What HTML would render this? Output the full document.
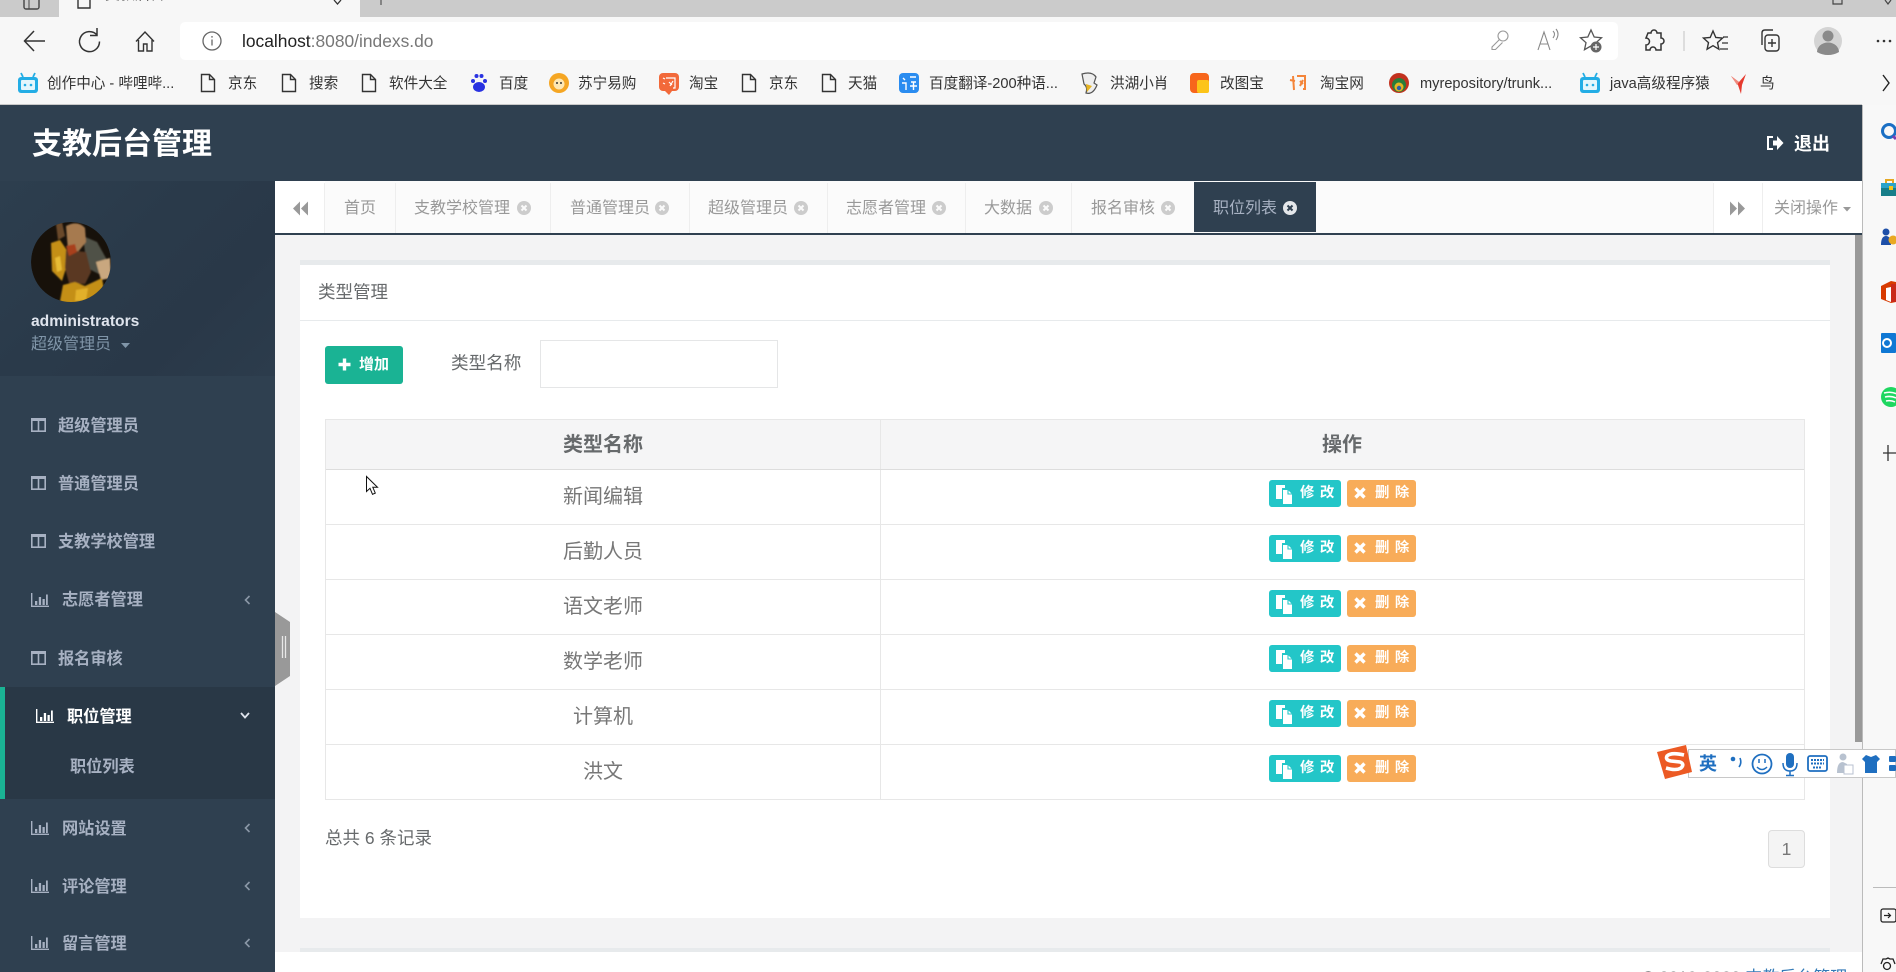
<!DOCTYPE html>
<html><head><meta charset="utf-8"><title>支教后台管理</title>
<style>
*{box-sizing:border-box;margin:0;padding:0}
html,body{width:1896px;height:972px;overflow:hidden;background:#fff}
body{position:relative;font-family:"Liberation Sans","Noto Sans CJK SC",sans-serif;color:#676a6c}
.b,.t,svg.a{position:absolute}
.t{white-space:nowrap;line-height:24px;height:24px}
.bm{font-size:14.6px;color:#333;margin-top:1px}
.tab{font-size:16px;color:#999}
.m{font-size:16.2px;font-weight:700;color:#a7b1c2;margin-top:1px}
.c{font-size:20px;color:#777;width:200px;text-align:center;left:503px;margin-top:1px}
.bt{font-size:14.4px;font-weight:700;color:#fff;letter-spacing:5.500px;margin-left:1px}
</style></head><body>
<!-- browser chrome -->
<div class="b" style="left:0;top:0;width:1896px;height:17px;background:#cbcbcb"></div>
<div class="b" style="left:59px;top:0;width:301px;height:17px;background:#f7f7f7"></div>
<div class="b" style="left:0;top:17px;width:1896px;height:88px;background:#f7f7f7"></div>
<div class="b" style="left:0;top:104px;width:1862px;height:1px;background:#c9c9c9"></div>
<div class="b" style="left:180px;top:22px;width:1438px;height:38px;background:#fff;border-radius:5px"></div>
<div class="t" style="left:105px;top:-17px;font-size:15px;color:#333">支教后台</div>
<div class="t" style="left:242px;top:29px;font-size:17.4px;color:#222">localhost<span style="color:#777">:8080/indexs.do</span></div>

<!-- bookmarks text -->
<div class="t bm" style="left:47px;top:71px">创作中心 - 哔哩哔...</div>
<div class="t bm" style="left:228px;top:71px">京东</div>
<div class="t bm" style="left:309px;top:71px">搜索</div>
<div class="t bm" style="left:389px;top:71px">软件大全</div>
<div class="t bm" style="left:499px;top:71px">百度</div>
<div class="t bm" style="left:578px;top:71px">苏宁易购</div>
<div class="t bm" style="left:689px;top:71px">淘宝</div>
<div class="t bm" style="left:769px;top:71px">京东</div>
<div class="t bm" style="left:848px;top:71px">天猫</div>
<div class="t bm" style="left:929px;top:71px">百度翻译-200种语...</div>
<div class="t bm" style="left:1110px;top:71px">洪湖小肖</div>
<div class="t bm" style="left:1220px;top:71px">改图宝</div>
<div class="t bm" style="left:1320px;top:71px">淘宝网</div>
<div class="t bm" style="left:1420px;top:71px">myrepository/trunk...</div>
<div class="t bm" style="left:1610px;top:71px">java高级程序猿</div>
<div class="t bm" style="left:1760px;top:71px">鸟</div>

<!-- app header -->
<div class="b" style="left:0;top:105px;width:1862px;height:76px;background:#2f4050"></div>
<div class="t" style="left:32px;top:133px;font-size:30px;font-weight:700;color:#fff">支教后台管理</div>
<div class="t" style="left:1794px;top:132px;font-size:18px;font-weight:700;color:#fff">退出</div>

<!-- sidebar -->
<div class="b" style="left:0;top:181px;width:275px;height:791px;background:#2f4050"></div>
<div class="b" style="left:0;top:181px;width:275px;height:195px;background:linear-gradient(135deg,#2d3e4e 0%,#2a3a4a 45%,#293848 70%,#2c3c4c 100%)"></div>
<div class="b" style="left:0;top:687px;width:275px;height:112px;background:#293846"></div>
<div class="b" style="left:0;top:687px;width:5px;height:112px;background:#1ab394"></div>
<div class="t" style="left:31px;top:310px;font-size:15.6px;font-weight:700;color:#dfe4ed">administrators</div>
<div class="t" style="left:31px;top:333px;font-size:16px;color:#8095a8">超级管理员</div>
<div class="t m" style="left:58px;top:413px">超级管理员</div>
<div class="t m" style="left:58px;top:471px">普通管理员</div>
<div class="t m" style="left:58px;top:529px">支教学校管理</div>
<div class="t m" style="left:62px;top:587px">志愿者管理</div>
<div class="t m" style="left:58px;top:646px">报名审核</div>
<div class="t m" style="left:67px;top:704px;color:#fff">职位管理</div>
<div class="t m" style="left:70px;top:754px">职位列表</div>
<div class="t m" style="left:62px;top:816px">网站设置</div>
<div class="t m" style="left:62px;top:874px">评论管理</div>
<div class="t m" style="left:62px;top:931px">留言管理</div>

<!-- main area -->
<div class="b" style="left:275px;top:181px;width:1587px;height:52px;background:#fbfbfb"></div>
<div class="b" style="left:275px;top:181px;width:50px;height:52px;background:#fff"></div>
<div class="b" style="left:1713px;top:181px;width:149px;height:52px;background:#fff"></div>
<div class="b" style="left:275px;top:233px;width:1587px;height:2px;background:#2f4050"></div>
<div class="b" style="left:275px;top:235px;width:1587px;height:717px;background:#f3f3f4"></div>
<div class="b" style="left:1855px;top:235px;width:7px;height:507px;background:#999"></div>
<div class="b" style="left:1194px;top:182px;width:122px;height:50px;background:#2f4050"></div>
<div class="t tab" style="left:344px;top:197px">首页</div>
<div class="t tab" style="left:414px;top:197px">支教学校管理</div>
<div class="t tab" style="left:570px;top:197px">普通管理员</div>
<div class="t tab" style="left:708px;top:197px">超级管理员</div>
<div class="t tab" style="left:846px;top:197px">志愿者管理</div>
<div class="t tab" style="left:984px;top:197px">大数据</div>
<div class="t tab" style="left:1091px;top:197px">报名审核</div>
<div class="t tab" style="left:1213px;top:197px;color:#a7b1c2">职位列表</div>
<div class="t tab" style="left:1774px;top:197px">关闭操作</div>

<!-- panel -->
<div class="b" style="left:300px;top:260px;width:1530px;height:658px;background:#fff;border-top:5px solid #e7eaec"></div>
<div class="b" style="left:300px;top:320px;width:1530px;height:1px;background:#e7eaec"></div>
<div class="t" style="left:318px;top:280px;font-size:17.5px;color:#676a6c">类型管理</div>
<div class="b" style="left:325px;top:346px;width:78px;height:38px;background:#1ab394;border-radius:3px"></div>
<div class="t" style="left:359px;top:353px;font-size:15px;font-weight:700;color:#fff">增加</div>
<div class="t" style="left:451px;top:351px;font-size:17.6px;color:#676a6c">类型名称</div>
<div class="b" style="left:540px;top:340px;width:238px;height:48px;background:#fff;border:1px solid #e5e6e7"></div>

<!-- table -->
<div class="b" style="left:325px;top:419px;width:1480px;height:381px;border:1px solid #e7e7e7"></div>
<div class="b" style="left:326px;top:420px;width:1478px;height:49px;background:#f5f5f6"></div>
<div class="b" style="left:880px;top:420px;width:1px;height:379px;background:#e7e7e7"></div>
<div class="b" style="left:326px;top:469px;width:1478px;height:1px;background:#ddd"></div>
<div class="b" style="left:326px;top:524px;width:1478px;height:1px;background:#e7e7e7"></div>
<div class="b" style="left:326px;top:579px;width:1478px;height:1px;background:#e7e7e7"></div>
<div class="b" style="left:326px;top:634px;width:1478px;height:1px;background:#e7e7e7"></div>
<div class="b" style="left:326px;top:689px;width:1478px;height:1px;background:#e7e7e7"></div>
<div class="b" style="left:326px;top:744px;width:1478px;height:1px;background:#e7e7e7"></div>
<div class="t c" style="top:432px;font-weight:700;color:#676a6c">类型名称</div>
<div class="t" style="left:1322px;top:433px;font-size:20px;font-weight:700;color:#676a6c">操作</div>
<div class="t c" style="top:484px">新闻编辑</div>
<div class="t c" style="top:539px">后勤人员</div>
<div class="t c" style="top:594px">语文老师</div>
<div class="t c" style="top:649px">数学老师</div>
<div class="t c" style="top:704px">计算机</div>
<div class="t c" style="top:759px">洪文</div>

<!-- row buttons -->
<div class="b" style="left:1269px;top:480px;width:72px;height:27px;background:#23c6c8;border-radius:3px"></div><div class="b" style="left:1347px;top:480px;width:69px;height:27px;background:#f8ac59;border-radius:3px"></div>
<div class="t bt" style="left:1299px;top:481px">修改</div><div class="t bt" style="left:1374px;top:481px">删除</div>
<div class="b" style="left:1269px;top:535px;width:72px;height:27px;background:#23c6c8;border-radius:3px"></div><div class="b" style="left:1347px;top:535px;width:69px;height:27px;background:#f8ac59;border-radius:3px"></div>
<div class="t bt" style="left:1299px;top:536px">修改</div><div class="t bt" style="left:1374px;top:536px">删除</div>
<div class="b" style="left:1269px;top:590px;width:72px;height:27px;background:#23c6c8;border-radius:3px"></div><div class="b" style="left:1347px;top:590px;width:69px;height:27px;background:#f8ac59;border-radius:3px"></div>
<div class="t bt" style="left:1299px;top:591px">修改</div><div class="t bt" style="left:1374px;top:591px">删除</div>
<div class="b" style="left:1269px;top:645px;width:72px;height:27px;background:#23c6c8;border-radius:3px"></div><div class="b" style="left:1347px;top:645px;width:69px;height:27px;background:#f8ac59;border-radius:3px"></div>
<div class="t bt" style="left:1299px;top:646px">修改</div><div class="t bt" style="left:1374px;top:646px">删除</div>
<div class="b" style="left:1269px;top:700px;width:72px;height:27px;background:#23c6c8;border-radius:3px"></div><div class="b" style="left:1347px;top:700px;width:69px;height:27px;background:#f8ac59;border-radius:3px"></div>
<div class="t bt" style="left:1299px;top:701px">修改</div><div class="t bt" style="left:1374px;top:701px">删除</div>
<div class="b" style="left:1269px;top:755px;width:72px;height:27px;background:#23c6c8;border-radius:3px"></div><div class="b" style="left:1347px;top:755px;width:69px;height:27px;background:#f8ac59;border-radius:3px"></div>
<div class="t bt" style="left:1299px;top:756px">修改</div><div class="t bt" style="left:1374px;top:756px">删除</div>

<div class="t" style="left:325px;top:826px;font-size:17.5px;color:#676a6c">总共 6 条记录</div>
<div class="b" style="left:1768px;top:830px;width:37px;height:38px;background:#f4f4f4;border:1px solid #ddd;border-radius:4px;text-align:center;line-height:36px;font-size:17.5px;color:#777">1</div>

<!-- footer -->
<div class="b" style="left:275px;top:952px;width:1587px;height:20px;background:#fff"></div>
<div class="b" style="left:300px;top:948px;width:1530px;height:4px;background:#e7eaec"></div>
<div class="t" style="left:1642px;top:966px;font-size:17px;color:#676a6c">© 2019-2020 <span style="color:#337ab7">支教后台管理</span></div>

<!-- right edge -->
<div class="b" style="left:1862px;top:105px;width:34px;height:867px;background:#f8f8f8"></div>
<div class="b" style="left:1862px;top:105px;width:1px;height:867px;background:#bbb"></div>
<div class="b" style="left:1873px;top:887px;width:23px;height:1px;background:#bbb"></div>

<!-- IME -->
<div class="b" style="left:1688px;top:749px;width:208px;height:29px;background:#fff;border:1px solid #c8c8c8"></div>
<div class="t" style="left:1699px;top:752px;font-size:18px;font-weight:700;color:#1f6fc0">英</div>

<svg class="a" style="left:0;top:0" width="1896" height="972" viewBox="0 0 1896 972">
<defs>
<symbol id="doc" viewBox="0 0 16 20" overflow="visible"><path d="M1.5 1.5h8l5 5v12h-13zM9.5 1.5v5h5" fill="none" stroke="#333" stroke-width="1.4"/></symbol>
<symbol id="col" viewBox="0 0 15 14" overflow="visible"><path d="M.8.8h13.4v12.4H.8zM7.5.8v12.4" fill="none" stroke="#a7b1c2" stroke-width="1.6"/><path d="M.8.8h13.4V3H.8z" fill="#a7b1c2"/></symbol>
<symbol id="bar" viewBox="0 0 18 14" overflow="visible"><path d="M.7 0v13.3H18" fill="none" stroke="currentColor" stroke-width="1.4"/><path d="M4 8h2.3v4H4zM7.8 4h2.3v8H7.8zM11.5 6h2.3v6h-2.3zM15 1.5h1.8V12H15z" fill="currentColor"/></symbol>
<symbol id="cx" viewBox="0 0 14 14" overflow="visible"><circle cx="7" cy="7" r="7" fill="#ccc"/><path d="M4.500 4.500l5 5M9.500 4.500l-5 5" stroke="#fbfbfb" stroke-width="2"/></symbol>
<symbol id="paste" viewBox="0 0 16 19" overflow="visible"><path d="M0 0h9v3H6v11H0z" fill="#fff"/><path d="M7 5h5l4 4v10H7z" fill="#fff"/><path d="M12 5v4h4" fill="none" stroke="#23c6c8" stroke-width="1.100"/></symbol>
<symbol id="xx" viewBox="0 0 12 12" overflow="visible"><path d="M1.500 1.500l9 9M10.500 1.500l-9 9" stroke="#fff" stroke-width="3.400"/></symbol>
<symbol id="chev" viewBox="0 0 8 12" overflow="visible"><path d="M6.500 2L2.500 6l4 4" fill="none" stroke="#8a97a6" stroke-width="1.600"/></symbol>
<clipPath id="av"><circle cx="71" cy="262" r="40"/></clipPath>
<filter id="bl"><feGaussianBlur stdDeviation=".9"/></filter>
</defs>

<!-- tab strip remnants -->
<rect x="24" y="-6" width="15" height="15" rx="2" fill="none" stroke="#444" stroke-width="1.400"/><path d="M29 -6v15" stroke="#444"/>
<path d="M78-6v14h12V-6" fill="none" stroke="#333" stroke-width="1.400"/>
<path d="M334 0l3.500 4 3.500-4" fill="none" stroke="#333" stroke-width="1.300"/>
<path d="M381 0v5" stroke="#555" stroke-width="1.200"/>
<path d="M1833 0v4h9V0M1885 0l3 4 3-4" fill="none" stroke="#444" stroke-width="1.200"/>

<!-- nav -->
<path d="M45 41H25M34 31L24.500 41 34 51" fill="none" stroke="#333" stroke-width="1.500"/>
<path d="M97 35a10 10 0 1 0 2.500 6.500M97 28v7.500h-7" fill="none" stroke="#333" stroke-width="1.500"/>
<path d="M136 41.500L145 32l9 9.500M138.500 40v11h5v-7h3.500v7h5V40" fill="none" stroke="#333" stroke-width="1.400"/>
<circle cx="212" cy="41" r="9" fill="none" stroke="#666" stroke-width="1.300"/><path d="M212 39.500v6M212 36v1.600" stroke="#666" stroke-width="1.300"/>
<!-- key, read aloud, fav -->
<circle cx="1503" cy="36" r="5" fill="none" stroke="#999" stroke-width="1.100"/><path d="M1499.500 39.500L1492 47v2.500h3.500l7-7" fill="none" stroke="#999" stroke-width="1.100"/>
<path d="M1538 50l6-18 6 18M1540 44h8M1553 31q3 3 0 7M1556 29q4 5 0 11" fill="none" stroke="#888" stroke-width="1.100"/>
<path d="M1591 30l3.200 7 7.300.700-5.500 5 1.500 7-6.500-3.800-6.500 3.800 1.500-7-5.500-5 7.300-.700z" fill="none" stroke="#555" stroke-width="1.300"/><circle cx="1596" cy="47" r="5.500" fill="#666"/><path d="M1596 44v6M1593 47h6" stroke="#fff" stroke-width="1.200"/>
<!-- extension, fav, collections, profile -->
<path d="M1648 33h3a3 3 0 0 1 6 0h4v5a3 3 0 0 1 0 6v6h-5a3 3 0 0 0-6 0h-4v-5a3 3 0 0 0 0-7z" fill="none" stroke="#333" stroke-width="1.500"/>
<path d="M1684 31v20" stroke="#ccc" stroke-width="1.200"/>
<path d="M1713 31l2.800 6.500 6.700.600-5 4.500 1.400 6.600-5.900-3.500-5.900 3.500 1.400-6.600-5-4.500 6.700-.600z" fill="none" stroke="#333" stroke-width="1.400"/><path d="M1723 37h5M1722 43h6M1720 49h8" stroke="#333" stroke-width="1.300"/>
<rect x="1765" y="35" width="14" height="16" rx="3" fill="none" stroke="#333" stroke-width="1.400"/><path d="M1762 45V33q0-3 3-3h8M1772 39v8M1768 43h8" fill="none" stroke="#333" stroke-width="1.400"/>
<circle cx="1828" cy="41" r="14" fill="#d4d4d4"/><circle cx="1828" cy="36" r="5.500" fill="#8a8a8a"/><path d="M1817 52a11 9.500 0 0 1 22 0q-5 3-11 3t-11-3z" fill="#8a8a8a"/>
<circle cx="1878" cy="41" r="1.300" fill="#333"/><circle cx="1884" cy="41" r="1.300" fill="#333"/><circle cx="1890" cy="41" r="1.300" fill="#333"/>

<!-- bookmark icons -->
<rect x="18" y="77" width="20" height="16" rx="3" fill="#23ade5"/><rect x="21" y="80" width="14" height="10" rx="1" fill="#e4f6fc"/><path d="M23 77l-2-4M33 77l2-4" stroke="#23ade5" stroke-width="1.800"/><circle cx="25" cy="85" r="1.300" fill="#23ade5"/><circle cx="31" cy="85" r="1.300" fill="#23ade5"/>
<use href="#doc" x="200" y="73" width="16" height="20"/><use href="#doc" x="281" y="73" width="16" height="20"/><use href="#doc" x="361" y="73" width="16" height="20"/><use href="#doc" x="741" y="73" width="16" height="20"/><use href="#doc" x="821" y="73" width="16" height="20"/>
<g fill="#2932e1"><ellipse cx="479" cy="87" rx="6" ry="5"/><circle cx="473" cy="81" r="2"/><circle cx="485" cy="81" r="2"/><circle cx="476.500" cy="76" r="2"/><circle cx="481.500" cy="76" r="2"/></g>
<circle cx="559" cy="83" r="10" fill="#f5a623"/><circle cx="559" cy="84" r="5.500" fill="#fde7b3"/><circle cx="557" cy="83" r="1" fill="#333"/><circle cx="561" cy="83" r="1" fill="#333"/>
<rect x="659" y="73" width="20" height="18" rx="4" fill="#f2693a"/><path d="M665 91l4 4 3-4z" fill="#f2693a"/><path d="M663 78l2 1M663 83l2 1M666 78h9v10h-2M669 82l3 3M673 81l-3 5" stroke="#fff" stroke-width="1.200" fill="none"/>
<rect x="899" y="73" width="20" height="20" rx="4" fill="#2a8cf0"/><path d="M903 78l2 2M902 83h4v7M910 77h6M911 82h5M913.500 82v8M910 86h7" stroke="#fff" stroke-width="1.400" fill="none"/>
<path d="M1082 74q10-3 14 3l-2 6 3 2q-4 10-11 8 2-6-2-9z" fill="#eee" stroke="#555" stroke-width="1.200"/><path d="M1086 84l6 2-5 6z" fill="#e6b422"/>
<rect x="1190" y="73" width="19" height="20" rx="4" fill="#f7661c"/><rect x="1197" y="80" width="12" height="13" rx="2" fill="#fcc419"/>
<path d="M1293 76l1 14M1290 80l5 1M1297 76h8v13h-2M1300 81l3 3M1303 80l-3 6" stroke="#f4853a" stroke-width="2" fill="none"/>
<circle cx="1399" cy="83" r="10" fill="#c2311e"/><circle cx="1399" cy="85" r="7" fill="#2a7d3a"/><circle cx="1399" cy="87" r="4.500" fill="#e6b422"/><circle cx="1399" cy="88" r="2.200" fill="#2b5fa8"/>
<rect x="1580" y="77" width="20" height="16" rx="3" fill="#23ade5"/><rect x="1583" y="80" width="14" height="10" rx="1" fill="#e4f6fc"/><path d="M1585 77l-2-4M1595 77l2-4" stroke="#23ade5" stroke-width="1.800"/><circle cx="1587" cy="85" r="1.300" fill="#23ade5"/><circle cx="1593" cy="85" r="1.300" fill="#23ade5"/>
<path d="M1731 76l8 6 7-8-4 11-1 9-3-9z" fill="#e63a2e"/><path d="M1731 76l8 6-2 3z" fill="#f08a7e"/>
<path d="M1883 75l6 8-6 8" fill="none" stroke="#222" stroke-width="1.400"/>

<!-- header logout -->
<path d="M1773 137h-5v12h5" fill="none" stroke="#fff" stroke-width="2"/><path d="M1773 140.500h4V136l6.500 7-6.500 7v-4.500h-4z" fill="#fff"/>

<!-- avatar -->
<g clip-path="url(#av)">
<circle cx="71" cy="262" r="40" fill="#17110a"/>
<g filter="url(#bl)">
<path d="M83 236l14 6 10 18-8 14-12-6z" fill="#4f5147"/>
<path d="M96 262l14-4 1 20-10 2z" fill="#c9a77f"/>
<path d="M66 226q12-6 19 2l1 14-8 10-10-2z" fill="#a67a50"/>
<path d="M56 224l6-2 3 14-7 4z" fill="#6a4a2a"/>
<path d="M51 243l9-3 8 12-2 16-4 13-10-10z" fill="#c48f18"/>
<path d="M66 250l20 2 5 20-6 12-16-1-4-15z" fill="#5a3820"/>
<path d="M66 246l9-2 2 8-8 4z" fill="#a8401e"/>
<path d="M60 301l3-16 12-3 10 4 17-8 2 12-16 16-18 2z" fill="#c48f18"/>
<path d="M76 290l12-2-2 12-11 1z" fill="#e2b02a"/>
<path d="M55 258l5-2 2 14-5 2z" fill="#e8bc35"/>
</g></g>
<path d="M121 343h9l-4.500 5z" fill="#8095a8"/>

<!-- menu icons -->
<use href="#col" x="31" y="418" width="15" height="14"/><use href="#col" x="31" y="476" width="15" height="14"/><use href="#col" x="31" y="534" width="15" height="14"/><use href="#col" x="31" y="651" width="15" height="14"/>
<g color="#a7b1c2"><use href="#bar" x="31" y="593" width="18" height="14"/><use href="#bar" x="31" y="821" width="18" height="14"/><use href="#bar" x="31" y="879" width="18" height="14"/><use href="#bar" x="31" y="936" width="18" height="14"/></g>
<g color="#fff"><use href="#bar" x="36" y="709" width="18" height="14"/></g>
<use href="#chev" x="243" y="594" width="8" height="12"/><use href="#chev" x="243" y="822" width="8" height="12"/><use href="#chev" x="243" y="880" width="8" height="12"/><use href="#chev" x="243" y="937" width="8" height="12"/>
<path d="M241 713l4 4.500 4-4.500" fill="none" stroke="#dfe4ed" stroke-width="1.800"/>
<!-- collapse handle -->
<path d="M275 612l15 10v54l-15 10z" fill="#999"/><path d="M282.500 636v22M285.500 636v22" stroke="#e8e8e8" stroke-width="1.300"/>

<!-- tabs -->
<path d="M324.500 183v50M395.500 183v50M550.500 183v50M689.500 183v50M827.500 183v50M965.500 183v50M1071.500 183v50M1713.500 183v50M1762.500 183v50" stroke="#eee"/>
<path d="M300 201.500v14l-7-7zM308 201.500v14l-7-7z" fill="#999"/>
<path d="M1730 201.500v14l7-7zM1738 201.500v14l7-7z" fill="#999"/>
<path d="M1843 207h8l-4 4.500z" fill="#999"/>
<use href="#cx" x="517" y="201" width="14" height="14"/><use href="#cx" x="655" y="201" width="14" height="14"/><use href="#cx" x="794" y="201" width="14" height="14"/><use href="#cx" x="932" y="201" width="14" height="14"/><use href="#cx" x="1039" y="201" width="14" height="14"/><use href="#cx" x="1161" y="201" width="14" height="14"/>
<circle cx="1290" cy="208" r="7" fill="#e4e7ea"/><path d="M1287.500 205.500l5 5M1292.500 205.500l-5 5" stroke="#2f4050" stroke-width="2"/>

<!-- add button plus -->
<path d="M344.500 358.500v12M338.500 364.500h12" stroke="#fff" stroke-width="3.400"/>

<!-- row button icons -->
<use href="#paste" x="1276" y="485" width="16" height="19"/><use href="#xx" x="1354" y="487" width="12" height="12"/>
<use href="#paste" x="1276" y="540" width="16" height="19"/><use href="#xx" x="1354" y="542" width="12" height="12"/>
<use href="#paste" x="1276" y="595" width="16" height="19"/><use href="#xx" x="1354" y="597" width="12" height="12"/>
<use href="#paste" x="1276" y="650" width="16" height="19"/><use href="#xx" x="1354" y="652" width="12" height="12"/>
<use href="#paste" x="1276" y="705" width="16" height="19"/><use href="#xx" x="1354" y="707" width="12" height="12"/>
<use href="#paste" x="1276" y="760" width="16" height="19"/><use href="#xx" x="1354" y="762" width="12" height="12"/>

<!-- cursor -->
<path d="M366.500 476.500v15l3.500-3.200 2.500 6 2.800-1.200-2.500-5.800h4.700z" fill="#fff" stroke="#111" stroke-width="1"/>

<!-- right sidebar icons -->
<circle cx="1889" cy="131" r="6.500" fill="none" stroke="#1a6fc4" stroke-width="3"/><path d="M1893 136l3 3" stroke="#7a3fb0" stroke-width="3"/>
<rect x="1881" y="183" width="15" height="13" fill="#177e89"/><rect x="1881" y="183" width="15" height="5" fill="#2aa3c9"/><path d="M1886 183v-3h7v3" fill="none" stroke="#e5a823" stroke-width="2"/><rect x="1889" y="186" width="4" height="4" fill="#f5c518"/>
<circle cx="1886" cy="232" r="3.500" fill="#1d4fa8"/><path d="M1881 245q0-9 5-9t5 9z" fill="#1d4fa8"/><circle cx="1893" cy="240" r="4.500" fill="#e9a923"/>
<path d="M1881 286l10-5 5 1v20l-5 1-10-4z" fill="#d83b01"/><path d="M1886 288l5-1v15l-5-2z" fill="#fff"/><rect x="1891" y="284" width="5" height="18" fill="#c92a1a"/>
<rect x="1881" y="333" width="15" height="20" rx="1" fill="#0f78d4"/><circle cx="1887" cy="343" r="4" fill="none" stroke="#fff" stroke-width="2"/>
<circle cx="1891" cy="397" r="10" fill="#1ed760"/><path d="M1884 393q7-2 13 1M1885 397q6-1.500 11 1M1886 401q5-1 9 1" stroke="#fff" stroke-width="1.500" fill="none"/>
<path d="M1888 445v16M1883 453h13" stroke="#333" stroke-width="1.300"/>
<rect x="1881" y="909" width="15" height="13" rx="2" fill="none" stroke="#222" stroke-width="1.300"/><path d="M1884 915.500h6M1888 913l2.500 2.500-2.500 2.500" fill="none" stroke="#222" stroke-width="1.200"/>
<circle cx="1887" cy="966" r="3.500" fill="none" stroke="#222" stroke-width="1.300"/><path d="M1881 964l2-5h3l2-1 2 1h3l2 5" fill="none" stroke="#222" stroke-width="1.300"/>

<!-- IME icons -->
<path d="M1657 752l29-7 6 27-27 7z" fill="#ec5a24"/>
<path d="M1684 755q-13-3-17 1-2 4 4 5l9 1q5 2 1 6-5 3-15 0" fill="none" stroke="#fff" stroke-width="3.600"/>
<circle cx="1733" cy="759" r="2.300" fill="#1f6fc0"/><path d="M1740 758q2 5-1 9" fill="none" stroke="#1f6fc0" stroke-width="1.600"/>
<circle cx="1762" cy="764" r="9.500" fill="none" stroke="#1f6fc0" stroke-width="1.800"/><path d="M1759 759v4M1765 759v4M1757 767q5 5 10 0" fill="none" stroke="#1f6fc0" stroke-width="1.500"/>
<rect x="1786" y="753" width="8" height="15" rx="4" fill="#1f6fc0"/><path d="M1783 763q0 8 7 8t7-8M1790 771v4M1786 775.500h8" fill="none" stroke="#1f6fc0" stroke-width="1.500"/>
<rect x="1808" y="756" width="19" height="15" rx="2" fill="none" stroke="#1f6fc0" stroke-width="1.800"/><path d="M1811 760h13M1811 763.500h13M1813 767.500h9" stroke="#1f6fc0" stroke-width="2" stroke-dasharray="2 1"/>
<circle cx="1843" cy="757" r="3.500" fill="#b8c2d0"/><path d="M1837 773q0-11 6-11l4 2v9z" fill="#b8c2d0"/><rect x="1844" y="765" width="9" height="9" fill="#fff" stroke="#b8c2d0"/>
<path d="M1866 755l5 2 5-2 4 4-3 3v11h-12v-11l-3-3z" fill="#1f6fc0"/>
<rect x="1889" y="756" width="7" height="6" rx="1" fill="#1f6fc0"/><rect x="1889" y="765" width="7" height="6" rx="1" fill="#1f6fc0"/>
</svg>
</body></html>
